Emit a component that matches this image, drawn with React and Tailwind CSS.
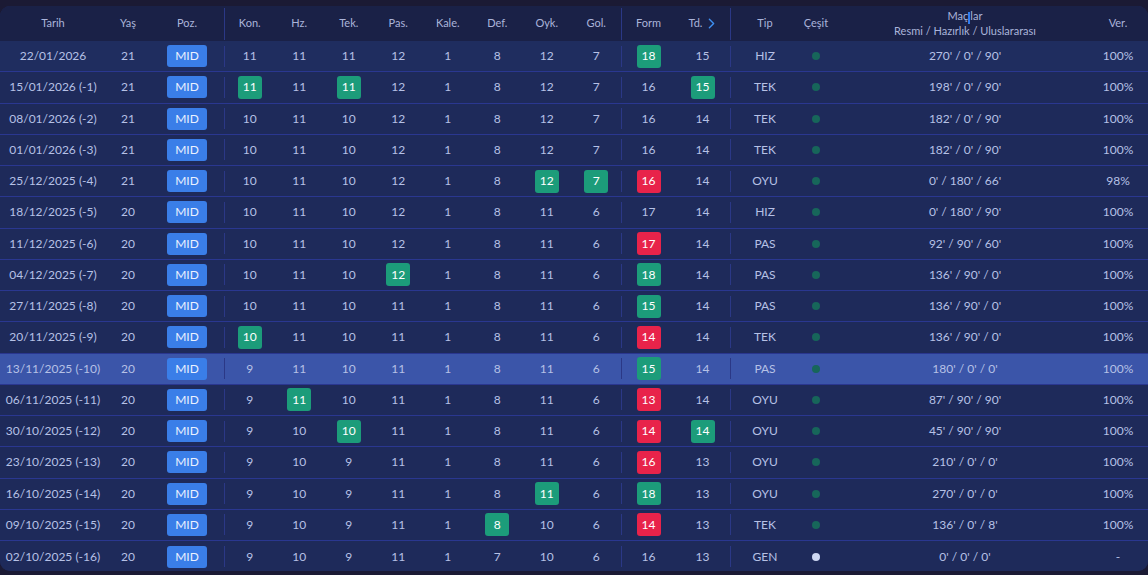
import React from "react";
import { ChevronRight } from "lucide-react";

const rows = [
  ["22/01/2026", 21, ["11", "11", "11", "12", "1", "8", "12", "7"], "18g", "15", "HIZ", "270' / 0' / 90'", "100%"],
  ["15/01/2026 (-1)", 21, ["11g", "11", "11g", "12", "1", "8", "12", "7"], "16", "15g", "TEK", "198' / 0' / 90'", "100%"],
  ["08/01/2026 (-2)", 21, ["10", "11", "10", "12", "1", "8", "12", "7"], "16", "14", "TEK", "182' / 0' / 90'", "100%"],
  ["01/01/2026 (-3)", 21, ["10", "11", "10", "12", "1", "8", "12", "7"], "16", "14", "TEK", "182' / 0' / 90'", "100%"],
  ["25/12/2025 (-4)", 21, ["10", "11", "10", "12", "1", "8", "12g", "7g"], "16r", "14", "OYU", "0' / 180' / 66'", "98%"],
  ["18/12/2025 (-5)", 20, ["10", "11", "10", "12", "1", "8", "11", "6"], "17", "14", "HIZ", "0' / 180' / 90'", "100%"],
  ["11/12/2025 (-6)", 20, ["10", "11", "10", "12", "1", "8", "11", "6"], "17r", "14", "PAS", "92' / 90' / 60'", "100%"],
  ["04/12/2025 (-7)", 20, ["10", "11", "10", "12g", "1", "8", "11", "6"], "18g", "14", "PAS", "136' / 90' / 0'", "100%"],
  ["27/11/2025 (-8)", 20, ["10", "11", "10", "11", "1", "8", "11", "6"], "15g", "14", "PAS", "136' / 90' / 0'", "100%"],
  ["20/11/2025 (-9)", 20, ["10g", "11", "10", "11", "1", "8", "11", "6"], "14r", "14", "TEK", "136' / 90' / 0'", "100%"],
  ["13/11/2025 (-10)", 20, ["9", "11", "10", "11", "1", "8", "11", "6"], "15g", "14", "PAS", "180' / 0' / 0'", "100%"],
  ["06/11/2025 (-11)", 20, ["9", "11g", "10", "11", "1", "8", "11", "6"], "13r", "14", "OYU", "87' / 90' / 90'", "100%"],
  ["30/10/2025 (-12)", 20, ["9", "10", "10g", "11", "1", "8", "11", "6"], "14r", "14g", "OYU", "45' / 90' / 90'", "100%"],
  ["23/10/2025 (-13)", 20, ["9", "10", "9", "11", "1", "8", "11", "6"], "16r", "13", "OYU", "210' / 0' / 0'", "100%"],
  ["16/10/2025 (-14)", 20, ["9", "10", "9", "11", "1", "8", "11g", "6"], "18g", "13", "OYU", "270' / 0' / 0'", "100%"],
  ["09/10/2025 (-15)", 20, ["9", "10", "9", "11", "1", "8g", "10", "6"], "14r", "13", "TEK", "136' / 0' / 8'", "100%"],
  ["02/10/2025 (-16)", 20, ["9", "10", "9", "11", "1", "7", "10", "6"], "16", "13", "GEN", "0' / 0' / 0'", "-"],
];

const statHeads = ["Kon.", "Hz.", "Tek.", "Pas.", "Kale.", "Def.", "Oyk.", "Gol."];

const GRID =
  "grid grid-cols-[106px_44px_74px_1px_repeat(8,49.5px)_1px_53px_55px_1px_68px_34px_255px_60px]";

// "11g" -> green badge, "16r" -> red badge
const Val = ({ raw }) => {
  const tag = raw.slice(-1);
  if (tag === "g" || tag === "r") {
    return (
      <span
        className={`w-[24px] h-[23px] rounded-[3px] flex items-center justify-center text-white ${
          tag === "g" ? "bg-[#1c9c7a]" : "bg-[#e8234a]"
        }`}
      >
        {raw.slice(0, -1)}
      </span>
    );
  }
  return <span>{raw}</span>;
};

const Divider = ({ tall }) => (
  <div className="flex items-center justify-center">
    <div className={`w-px bg-[#2b3886] ${tall ? "h-[32px]" : "h-[21px]"}`} />
  </div>
);

const Cell = ({ children, className = "" }) => (
  <div className={`flex items-center justify-center whitespace-nowrap ${className}`}>{children}</div>
);

const App = () => {
  return (
    <div
      className="w-[1148px] h-[575px] bg-[#1b1a34] pt-[6px] overflow-hidden"
      style={{ fontFamily: "Lato, 'Noto Sans', sans-serif" }}
    >
      <div className="rounded-[10px] overflow-hidden bg-[#1e2a5a] h-[565px]">
        {/* Header */}
        <div className={`${GRID} h-[35px] bg-[#1a2147] text-[11px] text-[#aab4da]`}>
          <Cell>Tarih</Cell>
          <Cell>Yaş</Cell>
          <Cell>Poz.</Cell>
          <Divider tall />
          {statHeads.map((h) => (
            <Cell key={h}>{h}</Cell>
          ))}
          <Divider tall />
          <Cell>Form</Cell>
          <Cell className="gap-[1px] pl-[4px]">
            Td.
            <ChevronRight size={17} strokeWidth={2} className="text-[#3d8ef0]" />
          </Cell>
          <Divider tall />
          <Cell>Tip</Cell>
          <Cell>Çeşit</Cell>
          <div className="flex flex-col items-center justify-center pl-[9px] leading-[14px] whitespace-nowrap">
            <span>
              Maç
              <span className="inline-block w-[2px] h-[12px] bg-[#2f7cf0] align-middle" />
              lar
            </span>
            <span>Resmi / Hazırlık / Uluslararası</span>
          </div>
          <Cell>Ver.</Cell>
        </div>

        {/* Rows */}
        {rows.map((r, i) => {
          const [date, age, stats, form, td, tip, mins, ver] = r;
          const selected = i === 10;
          const last = i === rows.length - 1;
          const bg = selected ? "bg-[#3b55a9]" : i === 0 ? "bg-[#1f2d5f]" : "bg-[#1e2a5a]";
          return (
            <div
              key={date}
              className={`${GRID} h-[31.25px] text-[12px] text-[#b6c1e6] ${bg} ${
                last ? "" : "border-b border-[#2a3790]"
              }`}
            >
              <Cell>{date}</Cell>
              <Cell>{age}</Cell>
              <Cell>
                <span className="w-[40px] h-[22px] rounded-[3px] bg-[#3a7ee8] text-[#eaf1ff] flex items-center justify-center">
                  MID
                </span>
              </Cell>
              <Divider />
              {stats.map((s, j) => (
                <Cell key={j}>
                  <Val raw={s} />
                </Cell>
              ))}
              <Divider />
              <Cell>
                <Val raw={form} />
              </Cell>
              <Cell>
                <Val raw={td} />
              </Cell>
              <Divider />
              <Cell>{tip}</Cell>
              <Cell>
                <span
                  className={`w-[8px] h-[8px] rounded-full ${
                    last ? "bg-[#cdd7f2]" : "bg-[#17665a]"
                  }`}
                />
              </Cell>
              <Cell className="pl-[9px]">{mins}</Cell>
              <Cell>{ver}</Cell>
            </div>
          );
        })}
      </div>
    </div>
  );
};

export default App;
